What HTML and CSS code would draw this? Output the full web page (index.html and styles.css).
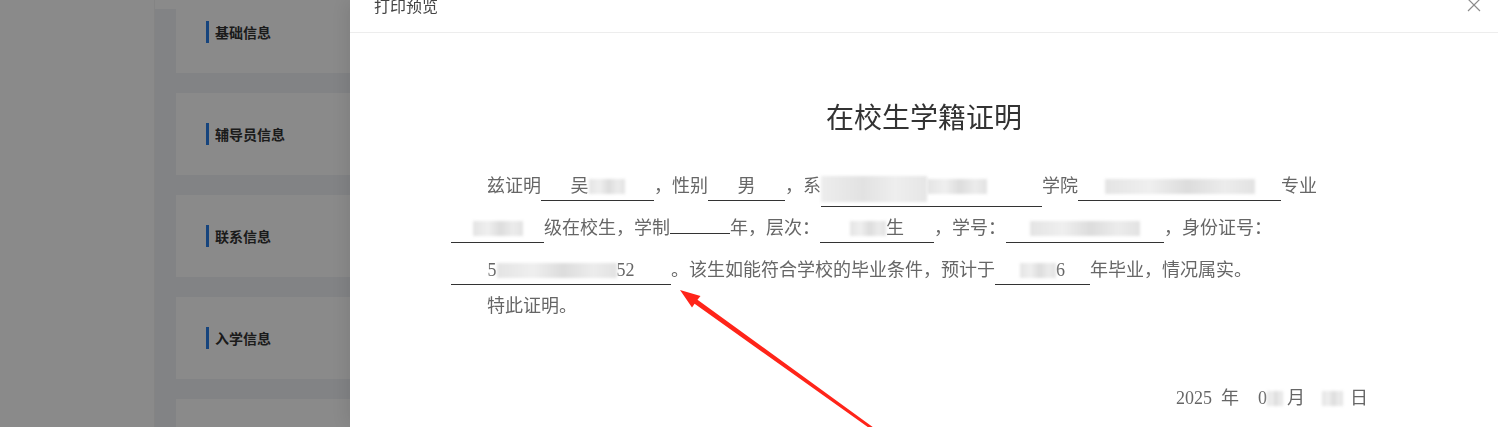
FILE: index.html
```html
<!DOCTYPE html>
<html lang="zh-CN">
<head>
  <meta charset="UTF-8" />
  <meta name="viewport" content="width=device-width, initial-scale=1.0"/>
  <title>打印预览</title>
  <link rel="stylesheet" href="styles.css">
</head>
<body>
  <div class="page">
    <div class="sidebar"></div>
    <div class="main">
      <div class="card-list">
        <div class="card"><span class="card-title">基础信息</span></div>
        <div class="card"><span class="card-title">辅导员信息</span></div>
        <div class="card"><span class="card-title">联系信息</span></div>
        <div class="card"><span class="card-title">入学信息</span></div>
        <div class="card"><span class="card-title"></span></div>
      </div>
    </div>
  </div>

  <div class="mask"></div>

  <div class="drawer">
    <div class="drawer-inner">
      <div class="drawer-header">
        <span class="drawer-title">打印预览</span>
        <svg class="drawer-close" width="14" height="14" viewBox="0 0 14 14">
          <path d="M1 1 L13 13 M13 1 L1 13" stroke="#8c8c8c" stroke-width="1.2" fill="none"/>
        </svg>
      </div>

      <div class="drawer-body">
        <h2 class="doc-title">在校生学籍证明</h2>

        <p class="doc-text">兹证明<span class="blank w-name">吴<span class="blur b-36"></span></span>，性别<span class="blank w-sex">男</span>，系<span class="blank w-dept"><span class="blur b-106 tall"></span><span class="blur b-60"></span></span>学院<span class="blank w-major"><span class="blur b-150"></span></span>专业<span class="blank w-grade"><span class="blur b-50"></span></span>级在校生，学制<span class="blank w-years"></span>年，层次：<span class="blank w-level"><span class="blur b-36"></span>生</span>，学号：<span class="blank w-sno"><span class="blur b-110"></span></span>，身份证号：<span class="blank w-id">5<span class="blur b-120"></span>52</span>。该生如能符合学校的毕业条件，预计于<span class="blank w-year"><span class="blur b-36"></span>6</span>年毕业，情况属实。</p>

        <p class="doc-end">特此证明。</p>

        <div class="doc-date">2025&nbsp;&nbsp;年<span class="date-part month">0<span class="blur b-16"></span></span>月<span class="date-part day"><span class="blur b-21"></span></span>日</div>
      </div>
    </div>
  </div>

  <svg class="arrow" width="1498" height="427" viewBox="0 0 1498 427">
    <polygon points="680,290 700.5,296 697.5,299.8 881,433 879,435 694.6,303.8 692,307.6" fill="#ff2419"/>
  </svg>
</body>
</html>
```

FILE: styles.css
```css
* {
  box-sizing: border-box;
}

html, body {
  height: 100%;
}

body {
  margin: 0;
  overflow: hidden;
  font-family: "Noto Sans CJK SC", "Noto Sans", sans-serif;
  background: #fff;
}

/* page underneath the mask */
.page {
  display: flex;
  height: 100vh;
}

.sidebar {
  width: 155px;
  flex: none;
  background: #fff;
  border-right: 1px solid #f4f4f4;
}

.main {
  flex: 1;
  background: #f0f2f5;
  border-top: 9px solid #fff;
}

.card-list {
  margin: -18px 0 0 21px;
}

.card {
  height: 82px;
  margin-bottom: 20px;
  padding-left: 30px;
  background: #fff;
  display: flex;
  align-items: center;
}

.card-title {
  border-left: 3px solid #2a7fe8;
  padding-left: 6px;
  line-height: 22px;
  font-size: 14px;
  font-weight: 700;
  color: #333;
}

.mask {
  position: fixed;
  inset: 0;
  background: rgba(0, 0, 0, 0.46);
}

/* drawer */
.drawer {
  position: fixed;
  top: 0;
  right: 0;
  bottom: 0;
  width: 1148px;
  background: #fff;
  overflow: hidden;
  box-shadow: -6px 0 16px rgba(0, 0, 0, 0.08);
}

.drawer-inner {
  margin-top: -22px;
}

.drawer-header {
  display: flex;
  align-items: center;
  justify-content: space-between;
  padding: 16px 17px 16px 24px;
  border-bottom: 1px solid #ededed;
}

.drawer-title {
  font-size: 16px;
  line-height: 22px;
  color: #444;
}

.drawer-body {
  padding: 63px 24px 24px;
}

.doc-title {
  margin: 0 0 29px;
  text-align: center;
  font-size: 28px;
  line-height: 40px;
  font-weight: 400;
  color: #333;
  font-family: "Noto Sans CJK SC", serif;
}

.doc-text,
.doc-end,
.doc-date {
  font-family: "Liberation Serif", "Noto Sans CJK SC", serif;
  font-size: 18px;
  color: #666;
}

.doc-text {
  width: 946px;
  margin: 0 auto;
  line-height: 42px;
  text-indent: 2em;
}

.doc-end {
  width: 946px;
  margin: 0 auto;
  line-height: 30px;
  text-indent: 2em;
}

.doc-date {
  width: 946px;
  margin: 62px auto 0;
  padding-right: 29px;
  text-align: right;
  line-height: 30px;
}

.blank {
  display: inline-block;
  text-indent: 0;
  text-align: center;
  line-height: 20px;
  padding-bottom: 4px;
  border-bottom: 1px solid #333;
  white-space: nowrap;
}

.w-name { width: 113px; }
.w-sex { width: 77px; }
.w-dept { width: 221px; text-align: left; }
.w-major { width: 203px; }
.w-grade { width: 93px; }
.w-years { width: 60px; }
.w-level { width: 114px; }
.w-sno { width: 158px; }
.w-id { width: 220px; }
.w-year { width: 95px; }

/* pixelated-out personal data */
.blur {
  display: inline-block;
  height: 15px;
  vertical-align: -2px;
  background: linear-gradient(90deg, #e4e4e4, #efefef 30%, #dcdcdc 55%, #ececec 80%, #e2e2e2);
  filter: blur(1.5px);
}

.blur.tall {
  height: 26px;
  vertical-align: -10px;
  background: linear-gradient(90deg, #ededed, #e2e2e2 40%, #eeeeee 70%, #e6e6e6);
}

.b-16 { width: 16px; }
.b-21 { width: 21px; }
.b-36 { width: 36px; }
.b-50 { width: 50px; }
.b-60 { width: 60px; }
.b-106 { width: 106px; }
.b-110 { width: 110px; }
.b-120 { width: 120px; }
.b-150 { width: 150px; }

.date-part {
  display: inline-block;
  text-align: left;
}

.date-part.month {
  width: 48px;
  padding-left: 19px;
}

.date-part.day {
  width: 45px;
  padding-left: 17px;
}

.arrow {
  position: fixed;
  top: 0;
  left: 0;
  pointer-events: none;
}
```
